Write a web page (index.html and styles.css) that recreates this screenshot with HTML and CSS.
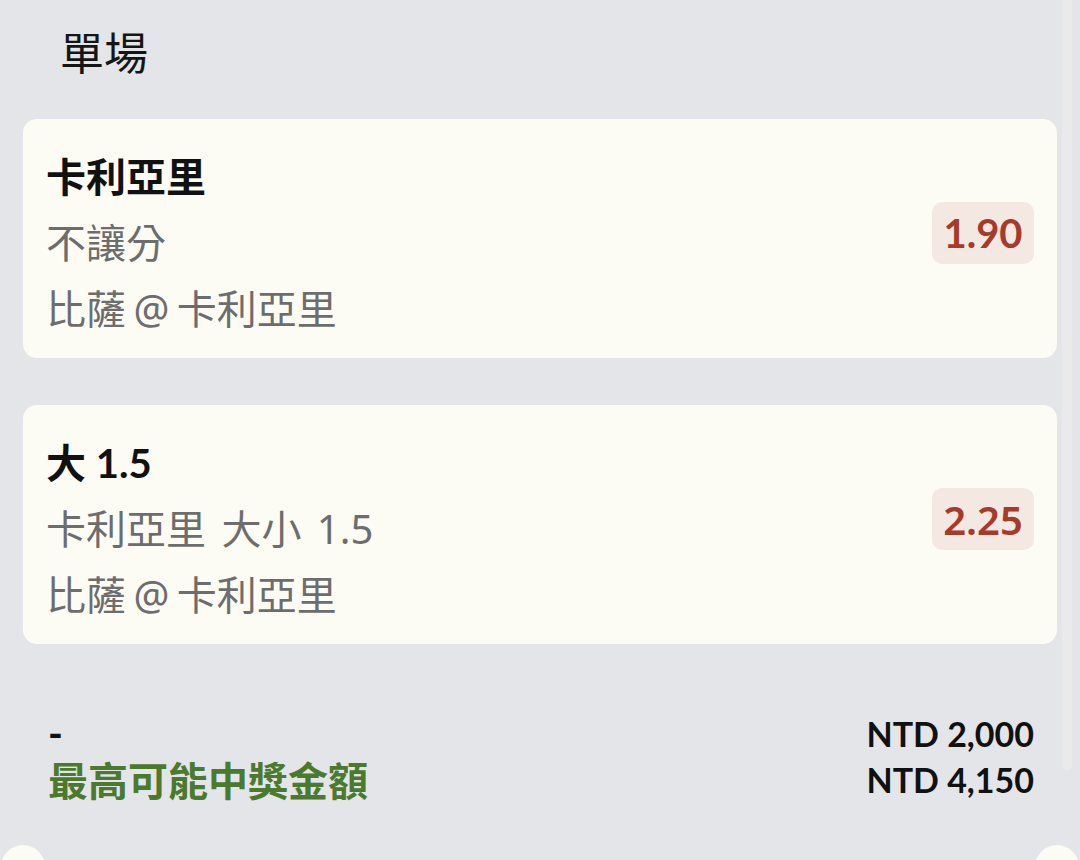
FILE: index.html
```html
<!DOCTYPE html>
<html lang="zh-Hant">
<head>
<meta charset="utf-8">
<title>單場</title>
<link rel="stylesheet" href="styles.css">
</head>
<body>
<div class="screen">
  <div class="page">
    <h1 class="title">單場</h1>
    <div class="cards">
      <div class="card">
        <div class="card-info">
          <div class="card-name">卡利亞里</div>
          <div class="card-line">不讓分</div>
          <div class="card-line line-match">比薩 @ 卡利亞里</div>
        </div>
        <div class="odds odds-lato">1.90</div>
      </div>
      <div class="card">
        <div class="card-info">
          <div class="card-name">大 1.5</div>
          <div class="card-line line-market">卡利亞里 大小 1.5</div>
          <div class="card-line line-match">比薩 @ 卡利亞里</div>
        </div>
        <div class="odds odds-noto">2.25</div>
      </div>
    </div>
    <div class="summary">
      <div class="summary-row">
        <span class="summary-label">-</span>
        <span class="summary-value">NTD 2,000</span>
      </div>
      <div class="summary-row">
        <span class="summary-label summary-green">最高可能中獎金額</span>
        <span class="summary-value">NTD 4,150</span>
      </div>
    </div>
  </div>
  <div class="scroll-track"></div>
  <div class="notch notch-left"></div>
  <div class="notch notch-right"></div>
</div>
</body>
</html>
```

FILE: styles.css
```css
html, body {
  margin: 0;
  padding: 0;
  background: #e4e5e8;
}

body {
  font-family: Lato, "Noto Sans CJK TC", "Noto Sans", sans-serif;
  color: #111111;
}

.screen {
  position: relative;
  width: 1080px;
  height: 860px;
  overflow: hidden;
}

.page {
  padding: 0 23px;
}

.title {
  margin: 18px 0 35px 37px;
  font-size: 44px;
  line-height: 66px;
  font-weight: 400;
  font-family: "Noto Sans CJK TC", sans-serif;
  color: #151515;
}

.cards {
  display: flex;
  flex-direction: column;
  gap: 47px;
}

.card {
  background: #fcfcf5;
  border-radius: 14px;
  padding: 25px 23px 16px 23px;
  display: flex;
  align-items: center;
  justify-content: space-between;
}

.card-info {
  display: flex;
  flex-direction: column;
}

.card-name {
  font-size: 40px;
  line-height: 66px;
  font-weight: 700;
  color: #111111;
}

.card-line {
  font-family: "Noto Sans", "Noto Sans CJK TC", sans-serif;
  font-size: 40px;
  line-height: 66px;
  font-weight: 400;
  color: #6d6d6d;
}

.line-market {
  word-spacing: 5px;
}

.line-match {
  word-spacing: -3px;
}

.odds {
  width: 102px;
  height: 62px;
  border-radius: 10px;
  background: #f4e8e3;
  color: #a63a2b;
  font-size: 40px;
  display: flex;
  align-items: center;
  justify-content: center;
  margin-bottom: 20px;
}

.odds-lato {
  font-family: Lato, sans-serif;
  font-weight: 700;
}

.odds-noto {
  font-family: "Noto Sans", sans-serif;
  font-weight: 600;
}

.summary {
  margin-top: 66px;
  padding: 0 23px 0 25px;
}

.summary-row {
  display: flex;
  justify-content: space-between;
  align-items: center;
  height: 46px;
}

.summary-label {
  font-size: 40px;
  font-weight: 700;
  color: #111111;
}

.summary-green {
  color: #4b7a2e;
}

.summary-value {
  font-size: 34px;
  font-weight: 700;
  color: #111111;
}

.scroll-track {
  position: absolute;
  top: 0;
  right: 8px;
  width: 10px;
  height: 770px;
  background: rgba(255, 255, 255, 0.22);
  border-radius: 0 0 4px 4px;
}

.notch {
  position: absolute;
  top: 845px;
  width: 44px;
  height: 44px;
  border-radius: 50%;
  background: #fcfcf5;
}

.notch-left {
  left: 1px;
}

.notch-right {
  left: 1035px;
}
```
